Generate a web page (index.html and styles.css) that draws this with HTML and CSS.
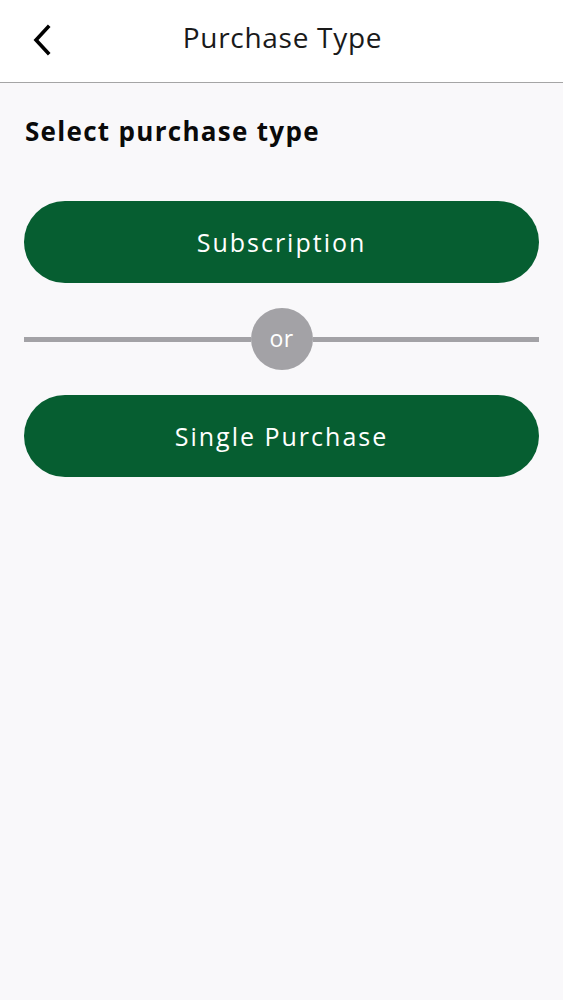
FILE: index.html
```html
<!DOCTYPE html>
<html lang="en">
<head>
    <meta charset="UTF-8">
    <meta name="viewport" content="width=device-width, initial-scale=1.0">
    <title>Purchase Type</title>
    <link rel="stylesheet" href="styles.css">
</head>
<body>
    <header class="top-bar">
        <button class="back-btn" aria-label="Back">
            <svg width="20" height="32" viewBox="0 0 20 32">
                <path d="M16 3 L4 16 L16 29" fill="none" stroke="#000" stroke-width="3.6" stroke-linecap="square"/>
            </svg>
        </button>
        <h1 class="title">Purchase Type</h1>
    </header>

    <main class="content">
        <h2 class="section-title">Select purchase type</h2>
        <button class="pill">Subscription</button>
        <div class="divider">
            <span class="divider-line"></span>
            <span class="or">or</span>
            <span class="divider-line"></span>
        </div>
        <button class="pill">Single Purchase</button>
    </main>
</body>
</html>
```

FILE: styles.css
```css
html, body {
    margin: 0;
    padding: 0;
    height: 100%;
}
body {
    font-family: "Open Sans", sans-serif;
    background-color: #f9f8fa;
}
.top-bar {
    height: 82px;
    background: #fff;
    border-bottom: 1.5px solid #a5a5a5;
    display: flex;
    align-items: center;
    justify-content: center;
    position: relative;
}
.back-btn {
    position: absolute;
    left: 30px;
    top: 24px;
    background: none;
    border: none;
    padding: 0;
    width: 24px;
    height: 34px;
}
.title {
    margin: 0;
    font-size: 28px;
    font-weight: 400;
    color: #1a1a1a;
    letter-spacing: 0.7px;
    position: relative;
    top: -4px;
    left: 1px;
}
.content {
    padding: 30px 24px 0;
    display: flex;
    flex-direction: column;
}
.section-title {
    margin: 0 0 52px;
    font-size: 26px;
    font-weight: 700;
    color: #0a0a0a;
    letter-spacing: 1.3px;
    padding-left: 1px;
}
.pill {
    height: 82px;
    border: none;
    border-radius: 41px;
    background-color: #065e31;
    color: #fff;
    font-family: "Open Sans", sans-serif;
    font-size: 25px;
    letter-spacing: 2px;
    width: 100%;
}
.divider {
    display: flex;
    align-items: center;
    margin: 25px 0;
}
.divider-line {
    flex: 1;
    height: 5px;
    background-color: #a3a2a6;
}
.or {
    width: 62px;
    height: 62px;
    border-radius: 50%;
    background-color: #a3a2a6;
    color: #fff;
    font-size: 23px;
    letter-spacing: 0.5px;
    display: flex;
    align-items: center;
    justify-content: center;
    padding-bottom: 2px;
    box-sizing: border-box;
}
```
